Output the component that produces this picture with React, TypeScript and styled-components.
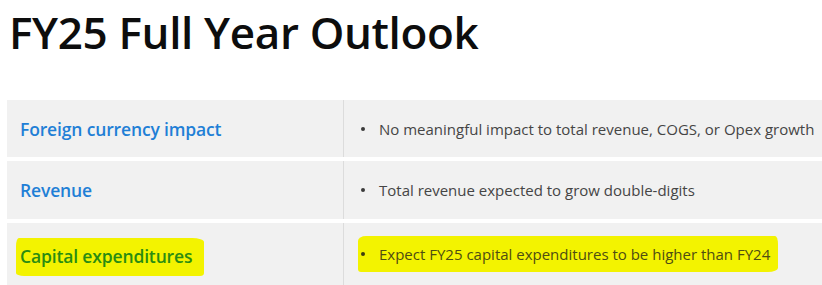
import React from "react";
import styled, { createGlobalStyle } from "styled-components";

const Global = createGlobalStyle`
  html, body { margin: 0; padding: 0; background: #ffffff; }
  body { font-family: "Open Sans", "Noto Sans", sans-serif; }
`;

const Page = styled.div`
  width: 822px;
  height: 285px;
  overflow: hidden;
  background: #ffffff;
`;

const Title = styled.h1`
  margin: 0;
  padding: 3px 0 0 9px;
  height: 96px;
  box-sizing: border-box;
  font-family: "Open Sans", sans-serif;
  font-weight: 600;
  font-size: 44px;
  line-height: 58px;
  letter-spacing: -0.35px;
  color: #0d0d0d;
`;

const Table = styled.div`
  display: flex;
  flex-direction: column;
  gap: 4px;
  margin-left: 7px;
  margin-top: 4px;
`;

const Row = styled.div<{ $h: number }>`
  display: grid;
  grid-template-columns: 336px 1fr;
  height: ${(p) => p.$h}px;
  background: #f1f1f1;
`;

const LabelCell = styled.div`
  display: flex;
  align-items: center;
  padding-left: 13px;
`;

const ValueCell = styled.div`
  display: flex;
  align-items: center;
  border-left: 1px solid #dcdcdc;
  padding-left: 17px;
`;

const Label = styled.span<{ $hl?: boolean }>`
  font-family: "Open Sans", sans-serif;
  font-weight: 600;
  font-size: 17.5px;
  letter-spacing: -0.15px;
  color: ${(p) => (p.$hl ? "#2a8c12" : "#1f7fd6")};
  ${(p) =>
    p.$hl &&
    `
    background: #f3f300;
    padding: 6px 12px 8px 4px;
    margin-left: -4px;
    margin-top: 4px;
    border-radius: 3px 12px 4px 8px / 8px 4px 3px 3px;
  `}
`;

const Bullet = styled.div<{ $hl?: boolean }>`
  display: flex;
  align-items: center;
  gap: 10px;
  font-family: "Open Sans", sans-serif;
  font-size: 15px;
  letter-spacing: 0px;
  color: ${(p) => (p.$hl ? "#4e4d12" : "#454545")};
  ${(p) =>
    p.$hl &&
    `
    background: #f3f300;
    padding: 8px 8px 8px 3px;
    margin-left: -3px;
    margin-top: -3px;
    border-radius: 8px 3px 10px 3px / 5px 8px 4px 3px;
  `}
  &::before {
    content: "";
    width: 4px;
    height: 4px;
    border-radius: 50%;
    background: ${(p) => (p.$hl ? "#3d3d10" : "#3a3a3a")};
    flex: none;
    margin-right: 4px;
  }
`;

const rows = [
  { label: "Foreign currency impact", text: "No meaningful impact to total revenue, COGS, or Opex growth", h: 57 },
  { label: "Revenue", text: "Total revenue expected to grow double-digits", h: 58 },
  { label: "Capital expenditures", text: "Expect FY25 capital expenditures to be higher than FY24", h: 64, hl: true },
];

export default function App() {
  return (
    <Page>
      <Global />
      <Title>FY25 Full Year Outlook</Title>
      <Table>
        {rows.map((r) => (
          <Row key={r.label} $h={r.h}>
            <LabelCell>
              <Label $hl={r.hl}>{r.label}</Label>
            </LabelCell>
            <ValueCell>
              <Bullet $hl={r.hl}>{r.text}</Bullet>
            </ValueCell>
          </Row>
        ))}
      </Table>
    </Page>
  );
}
